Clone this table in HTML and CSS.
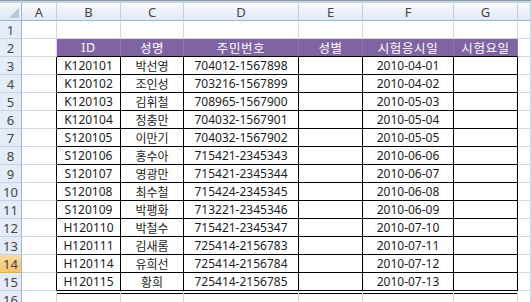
FILE: index.html
```html
<!DOCTYPE html>
<html lang="ko">
<head>
<meta charset="utf-8">
<link rel="stylesheet" href="styles.css">
</head>
<body>
<div class="topbar"></div>
<div class="sheet">
  <div class="corner"><span class="tri"></span></div>
  <div class="ch">A</div><div class="ch">B</div><div class="ch">C</div><div class="ch">D</div><div class="ch">E</div><div class="ch">F</div><div class="ch">G</div><div class="ch"></div>

  <div class="rh">1</div><div class="c"></div><div class="c"></div><div class="c"></div><div class="c"></div><div class="c"></div><div class="c"></div><div class="c"></div><div class="c"></div>

  <div class="rh">2</div><div class="c"></div><div class="h">ID</div><div class="h">성명</div><div class="h">주민번호</div><div class="h">성별</div><div class="h">시험응시일</div><div class="h hl">시험요일</div><div class="c"></div>

  <div class="rh">3</div><div class="c tl"></div><div class="d">K120101</div><div class="d">박선영</div><div class="d">704012-1567898</div><div class="d"></div><div class="d">2010-04-01</div><div class="d"></div><div class="c"></div>
  <div class="rh">4</div><div class="c tl"></div><div class="d">K120102</div><div class="d">조인성</div><div class="d">703216-1567899</div><div class="d"></div><div class="d">2010-04-02</div><div class="d"></div><div class="c"></div>
  <div class="rh">5</div><div class="c tl"></div><div class="d">K120103</div><div class="d">김휘철</div><div class="d">708965-1567900</div><div class="d"></div><div class="d">2010-05-03</div><div class="d"></div><div class="c"></div>
  <div class="rh">6</div><div class="c tl"></div><div class="d">K120104</div><div class="d">정충만</div><div class="d">704032-1567901</div><div class="d"></div><div class="d">2010-05-04</div><div class="d"></div><div class="c"></div>
  <div class="rh">7</div><div class="c tl"></div><div class="d">S120105</div><div class="d">이만기</div><div class="d">704032-1567902</div><div class="d"></div><div class="d">2010-05-05</div><div class="d"></div><div class="c"></div>
  <div class="rh">8</div><div class="c tl"></div><div class="d">S120106</div><div class="d">홍수아</div><div class="d">715421-2345343</div><div class="d"></div><div class="d">2010-06-06</div><div class="d"></div><div class="c"></div>
  <div class="rh">9</div><div class="c tl"></div><div class="d">S120107</div><div class="d">영광만</div><div class="d">715421-2345344</div><div class="d"></div><div class="d">2010-06-07</div><div class="d"></div><div class="c"></div>
  <div class="rh">10</div><div class="c tl"></div><div class="d">S120108</div><div class="d">최수철</div><div class="d">715424-2345345</div><div class="d"></div><div class="d">2010-06-08</div><div class="d"></div><div class="c"></div>
  <div class="rh">11</div><div class="c tl"></div><div class="d">S120109</div><div class="d">박팽화</div><div class="d">713221-2345346</div><div class="d"></div><div class="d">2010-06-09</div><div class="d"></div><div class="c"></div>
  <div class="rh">12</div><div class="c tl"></div><div class="d">H120110</div><div class="d">박철수</div><div class="d">715421-2345347</div><div class="d"></div><div class="d">2010-07-10</div><div class="d"></div><div class="c"></div>
  <div class="rh">13</div><div class="c tl"></div><div class="d">H120111</div><div class="d">김새롬</div><div class="d">725414-2156783</div><div class="d"></div><div class="d">2010-07-11</div><div class="d"></div><div class="c"></div>
  <div class="rh sel">14</div><div class="c tl"></div><div class="d">H120114</div><div class="d">유희선</div><div class="d">725414-2156784</div><div class="d"></div><div class="d">2010-07-12</div><div class="d"></div><div class="c"></div>
  <div class="rh">15</div><div class="c tl"></div><div class="d">H120115</div><div class="d">황희</div><div class="d">725414-2156785</div><div class="d"></div><div class="d">2010-07-13</div><div class="d"></div><div class="c"></div>

  <div class="rh">16</div><div class="c"></div><div class="c dbl"></div><div class="c dbl"></div><div class="c dbl"></div><div class="c dbl"></div><div class="c dbl"></div><div class="c dbl"></div><div class="c"></div>
</div>
</body>
</html>
```

FILE: styles.css
```css
html, body {
  margin: 0;
  padding: 0;
  background: #ffffff;
  overflow: hidden;
}
body {
  width: 531px;
  height: 302px;
  font-family: "Noto Sans", "Noto Sans CJK KR", sans-serif;
  font-size: 12px;
  color: #1c1c1c;
}
.topbar {
  height: 3px;
  box-sizing: border-box;
  border-top: 1px solid #8d9aa8;
  background: #c9d3df;
}
.sheet {
  display: grid;
  grid-template-columns: 22px 35px 64px 63px 115px 64px 91px 64px 1fr;
  grid-auto-rows: 18px;
}
.sheet > div {
  box-sizing: border-box;
  display: flex;
  align-items: center;
  justify-content: center;
  white-space: nowrap;
  overflow: hidden;
}
.corner {
  position: relative;
  background: linear-gradient(#f4f7fb, #dfe7f1);
  border-right: 1px solid #9eb6ce;
  border-bottom: 1px solid #9eb6ce;
}
.tri {
  position: absolute;
  right: 2px;
  bottom: 2px;
  width: 0;
  height: 0;
  border-left: 10px solid transparent;
  border-bottom: 10px solid #b7c6d9;
}
.ch {
  background: linear-gradient(#f8fafd, #e2e9f3);
  border-right: 1px solid #c5d1df;
  border-bottom: 1px solid #9eb6ce;
  color: #444444;
  font-size: 13px;
}
.rh {
  background: #e4ecf7;
  border-right: 1px solid #9eb6ce;
  border-bottom: 1px solid #c5d3e4;
  color: #444444;
  font-size: 13px;
}
.rh.sel {
  background: linear-gradient(#f9dca3, #f3c46a);
  border-bottom-color: #e0ae55;
}
.c {
  border-right: 1px solid #d0d7e5;
  border-bottom: 1px solid #d0d7e5;
}
.c.tl {
  border-right-color: #000;
}
.h {
  background: #8064a2;
  color: #ffffff;
  font-size: 12.5px;
  letter-spacing: 0.6px;
  border-right: 1px solid #9079ad;
  border-bottom: 1px solid #000;
}
.d {
  border-right: 1px solid #000;
  border-bottom: 1px solid #000;
  color: #1c1c1c;
}
.c.dbl {
  box-shadow: inset 0 2px 0 #ffffff, inset 0 3px 0 #000000;
}
```
